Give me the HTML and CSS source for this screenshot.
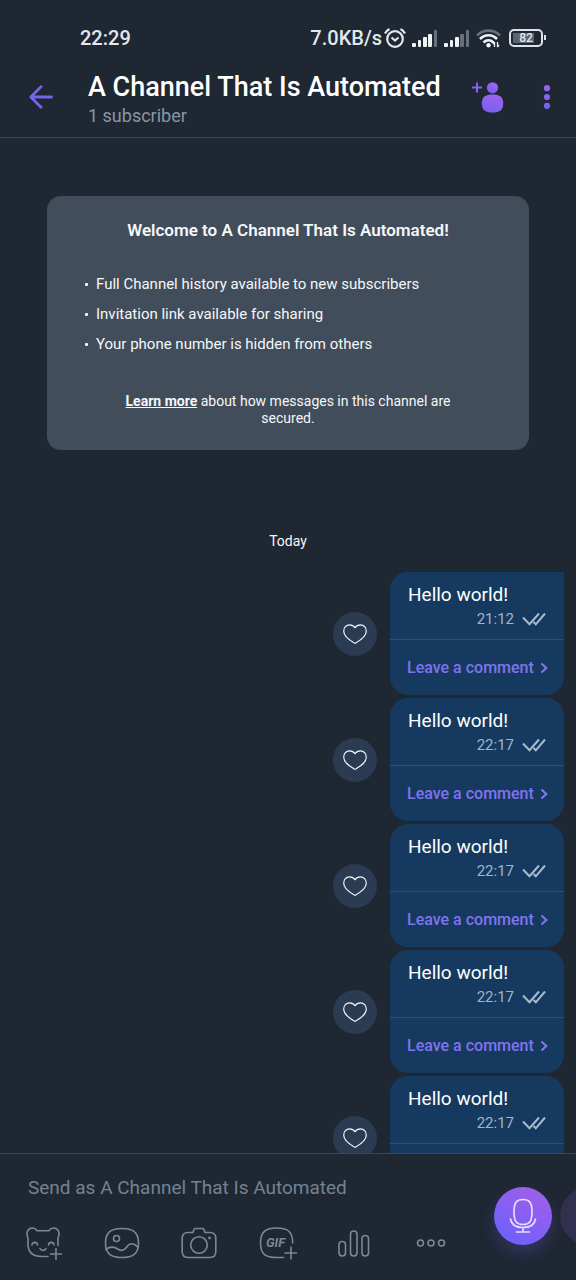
FILE: index.html
```html
<!DOCTYPE html>
<html lang="en">
<head>
<meta charset="utf-8">
<meta name="viewport" content="width=device-width, initial-scale=1">
<title>A Channel That Is Automated</title>
<link rel="stylesheet" href="styles.css">
</head>
<body>
<svg class="defs" width="0" height="0" aria-hidden="true">
  <defs>
    <linearGradient id="violet" x1="0" y1="1" x2="0.5" y2="0">
      <stop offset="0" stop-color="#7360f2"/>
      <stop offset="1" stop-color="#9b63ee"/>
    </linearGradient>
    <linearGradient id="violet-dots" gradientUnits="userSpaceOnUse" x1="0" y1="24" x2="0" y2="0">
      <stop offset="0" stop-color="#6f62f2"/>
      <stop offset="1" stop-color="#9b63ee"/>
    </linearGradient>
    <symbol id="heart" viewBox="0 0 24 20">
      <path d="M12 19.300C9 17.600.7 13.500.7 7 .7 3.500 3.200.8 6.500.8c2.400 0 4.400 1.200 5.500 3 1.100-1.800 3.100-3 5.500-3 3.300 0 5.800 2.700 5.800 6.200 0 6.500-8.300 10.600-11.300 12.300z" fill="none" stroke="#f2f5f8" stroke-width="1.200" stroke-linejoin="round"/>
    </symbol>
    <symbol id="ticks" viewBox="0 0 24 14">
      <path d="M1 5.500l6.500 6.700L17 1.500M11.500 10l2.300 2.300L23 1.500" fill="none" stroke="#a9bbcd" stroke-width="2"/>
    </symbol>
    <symbol id="chevron" viewBox="0 0 8 12">
      <path d="M1.500 1.500L6.300 6 1.500 10.500" fill="none" stroke="#8074ec" stroke-width="2.200"/>
    </symbol>
    <symbol id="signal" viewBox="0 0 26 17">
      <rect x="0" y="13" width="4" height="4" rx="1"/>
      <rect x="6" y="10" width="3" height="7" rx="1"/>
      <rect x="11" y="7" width="4" height="10" rx="1"/>
    </symbol>
  </defs>
</svg>

<div class="status">
  <span class="clock">22:29</span>
  <div class="status-icons">
    <span>7.0KB/s</span>
    <svg class="alarm" width="22" height="20" viewBox="0 0 22 20" fill="none" stroke="#e4e8ec" stroke-width="2.200">
      <circle cx="11" cy="11" r="7.800"/>
      <path d="M1 5.500C2 3.500 3.500 2 5.500 1M21 5.500C20 3.500 18.500 2 16.500 1M7.500 9.500l3.500 3 3.500-3"/>
    </svg>
    <svg class="bars" width="26" height="17" viewBox="0 0 26 17" fill="#f0f3f5">
      <use href="#signal"/>
      <rect x="16" y="4" width="4" height="13" rx="1"/>
      <rect x="22" y="0" width="3" height="17" rx="1" fill="#66707c"/>
    </svg>
    <svg class="bars" width="26" height="17" viewBox="0 0 26 17" fill="#f0f3f5">
      <use href="#signal"/>
      <rect x="16" y="4" width="4" height="13" rx="1" fill="#66707c"/>
      <rect x="22" y="0" width="3" height="17" rx="1" fill="#66707c"/>
    </svg>
    <svg class="wifi" width="25" height="19" viewBox="0 0 25 19" fill="none" stroke="#f0f3f5" stroke-width="2.600">
      <path d="M1 6.500C7.500 0 17.500 0 24 6.500" stroke="#66707c"/>
      <path d="M4 10c5-5 12-5 17 0M7.500 13.500c3-2.800 7-2.800 10 0"/>
      <circle cx="12.500" cy="16.300" r="2.200" fill="#f0f3f5" stroke="none"/>
      <path d="M18.500 18v-5M21.500 13v5M17 15l1.500-2M23 16l-1.500 2" stroke-width="1.300"/>
    </svg>
    <span class="battery"><span class="battery-level">82</span></span>
  </div>
</div>

<header class="header">
  <button class="icon-button" aria-label="Back">
    <svg width="24" height="24" viewBox="0 0 24 24" fill="none" stroke="#7663ee" stroke-width="2.800" stroke-linecap="round" stroke-linejoin="round">
      <path d="M22.500 12H2M12 1.800L1.800 12 12 22.200"/>
    </svg>
  </button>
  <div class="heading">
    <h1 class="title">A Channel That Is Automated</h1>
    <p class="subtitle">1 subscriber</p>
  </div>
  <button class="icon-button" aria-label="Add subscriber">
    <svg width="32" height="32" viewBox="0 0 32 32" fill="url(#violet)">
      <path d="M4 1.500h2V5.600h4v2H6v4H4v-4H0v-2h4z" fill="#8262f0"/>
      <circle cx="20.500" cy="6.800" r="5.600"/>
      <path d="M20.500 13.500c7.500 0 10.700 2.600 10.700 9s-3.200 9-10.700 9-10.700-2.600-10.700-9 3.200-9 10.700-9z"/>
    </svg>
  </button>
  <button class="icon-button more" aria-label="More options">
    <svg width="8" height="24" viewBox="0 0 8 24" fill="url(#violet-dots)">
      <circle cx="4" cy="3.200" r="3.100"/><circle cx="4" cy="12" r="3.100"/><circle cx="4" cy="20.800" r="3.100"/>
    </svg>
  </button>
</header>

<main class="chat">
  <section class="welcome">
    <h2 class="welcome-title">Welcome to A Channel That Is Automated!</h2>
    <ul class="features">
      <li>Full Channel history available to new subscribers</li>
      <li>Invitation link available for sharing</li>
      <li>Your phone number is hidden from others</li>
    </ul>
    <p class="security"><a href="#security">Learn more</a> about how messages in this channel are secured.</p>
  </section>
  <p class="day">Today</p>
  <div class="messages">
    <article class="message">
      <button class="like" aria-label="Like"><svg width="24" height="20"><use href="#heart"/></svg></button>
      <div class="bubble first">
        <div class="body"><p class="text">Hello world!</p><p class="meta"><time>21:12</time><svg width="24" height="14"><use href="#ticks"/></svg></p></div>
        <button class="comment">Leave a comment<svg width="8" height="12"><use href="#chevron"/></svg></button>
      </div>
    </article>
    <article class="message">
      <button class="like" aria-label="Like"><svg width="24" height="20"><use href="#heart"/></svg></button>
      <div class="bubble">
        <div class="body"><p class="text">Hello world!</p><p class="meta"><time>22:17</time><svg width="24" height="14"><use href="#ticks"/></svg></p></div>
        <button class="comment">Leave a comment<svg width="8" height="12"><use href="#chevron"/></svg></button>
      </div>
    </article>
    <article class="message">
      <button class="like" aria-label="Like"><svg width="24" height="20"><use href="#heart"/></svg></button>
      <div class="bubble">
        <div class="body"><p class="text">Hello world!</p><p class="meta"><time>22:17</time><svg width="24" height="14"><use href="#ticks"/></svg></p></div>
        <button class="comment">Leave a comment<svg width="8" height="12"><use href="#chevron"/></svg></button>
      </div>
    </article>
    <article class="message">
      <button class="like" aria-label="Like"><svg width="24" height="20"><use href="#heart"/></svg></button>
      <div class="bubble">
        <div class="body"><p class="text">Hello world!</p><p class="meta"><time>22:17</time><svg width="24" height="14"><use href="#ticks"/></svg></p></div>
        <button class="comment">Leave a comment<svg width="8" height="12"><use href="#chevron"/></svg></button>
      </div>
    </article>
    <article class="message">
      <button class="like" aria-label="Like"><svg width="24" height="20"><use href="#heart"/></svg></button>
      <div class="bubble">
        <div class="body"><p class="text">Hello world!</p><p class="meta"><time>22:17</time><svg width="24" height="14"><use href="#ticks"/></svg></p></div>
        <button class="comment" aria-label="Leave a comment"></button>
      </div>
    </article>
  </div>
</main>

<footer class="composer">
  <div class="compose">
    <input class="field" type="text" placeholder="Send as A Channel That Is Automated" aria-label="Message">
    <div class="tools">
      <button class="tool" aria-label="Stickers">
        <svg width="36" height="34" viewBox="0 0 36 34">
          <path d="M22 30.500h-6C7 30.500 2 26.500 2 18v-6C-.5 7 2 2 6 2c2.500 0 4 1 5 2.700h12C24 3 25.500 2 28 2c4 0 6.500 5 4 10v7.500M6 19c.5-3.500 5-3.500 5.500 0M22.500 19c.5-3.500 5-3.500 5.500 0M14 22.500c1 2.500 5 2.500 6 0M30 22.500v11M24.500 28h11"/>
        </svg>
      </button>
      <button class="tool" aria-label="Gallery">
        <svg width="36" height="34" viewBox="0 0 36 34">
          <path d="M18 2.500C28 2.500 34.500 5.500 34.500 17S28 31.500 18 31.500 1.500 28.500 1.500 17 8 2.500 18 2.500z"/>
          <circle cx="12.500" cy="12.500" r="3"/>
          <path d="M1.800 23.500c4-3 8-3 12-.5 3 2 6 2 8.500-1.500 3.500-5 7-5 12 0"/>
        </svg>
      </button>
      <button class="tool" aria-label="Camera">
        <svg width="36" height="34" viewBox="0 0 36 34">
          <path d="M7 6.500h5l1-3c.3-.8.600-1 1.500-1h7c.9 0 1.200.2 1.500 1l1 3h5c4 0 5.800 2 5.800 6v13c0 4-1.800 6-5.800 6H7c-4 0-5.800-2-5.800-6v-13c0-4 1.800-6 5.800-6z"/>
          <circle cx="18" cy="19" r="8.300"/>
          <circle cx="28.500" cy="12" r=".6"/>
        </svg>
      </button>
      <button class="tool" aria-label="GIF">
        <svg width="38" height="34" viewBox="0 0 38 34">
          <path d="M24.500 31.500h-7C7 31.500 1.500 28.500 1.500 17S7 2 17.500 2s16.200 3 16.200 15M32 21v12M26 27h12"/>
          <text class="gif" x="7" y="21">GIF</text>
        </svg>
      </button>
      <button class="tool" aria-label="Poll">
        <svg width="36" height="34" viewBox="0 0 36 34">
          <rect x="1" y="15.500" width="6.500" height="14.500" rx="3.200"/>
          <rect x="12.500" y="5" width="6.500" height="25" rx="3.200"/>
          <rect x="24" y="9.500" width="6.500" height="20.500" rx="3.200"/>
        </svg>
      </button>
      <button class="tool" aria-label="More">
        <svg width="30" height="34" viewBox="0 0 30 34">
          <circle cx="4.500" cy="17" r="3"/><circle cx="15" cy="17" r="3"/><circle cx="25.500" cy="17" r="3"/>
        </svg>
      </button>
    </div>
  </div>
  <div class="recorders">
    <button class="record" aria-label="Record voice message">
      <svg width="28" height="36" viewBox="0 0 28 36" fill="none" stroke="#ecdcff" stroke-width="1.700" stroke-linecap="round">
        <path d="M14 1.500c6 0 9 2.500 9 12.500s-3 12.500-9 12.500S5 24 5 14 8 1.500 14 1.500zM1.500 21C2.500 27 7 29.500 14 29.500S25.500 27 26.500 21M14 29.500V34M7.500 34h13"/>
      </svg>
    </button>
    <button class="record video" aria-label="Record video message"></button>
  </div>
</footer>
</body>
</html>
```
FILE: styles.css
```css
* {
  box-sizing: border-box;
}

body {
  margin: 0;
  height: 100vh;
  display: flex;
  flex-direction: column;
  overflow: hidden;
  background: #1e2732;
  color: #f5f7f9;
  font-family: Roboto, "Liberation Sans", sans-serif;
}

h1, h2, p, ul {
  margin: 0;
  padding: 0;
}

button {
  padding: 0;
  border: 0;
  background: none;
  color: inherit;
  font: inherit;
  cursor: pointer;
}

svg {
  display: block;
  flex: none;
}

.defs {
  position: absolute;
}

.status {
  display: flex;
  align-items: center;
  justify-content: space-between;
  padding: 24px 33px 4px 80px;
  font-size: 20px;
  font-weight: 500;
  line-height: 28px;
  color: #e4e8ec;
}

.status-icons {
  display: flex;
  align-items: center;
}

.alarm {
  margin-left: 2px;
}

.bars {
  margin-left: 6px;
}

.wifi {
  margin: 0 8px 0 6px;
}

.battery {
  position: relative;
  padding: 2px;
  border: 2px solid #dfe3e7;
  border-radius: 5px;
}

.battery::after {
  content: "";
  position: absolute;
  top: 4px;
  right: -5px;
  width: 2px;
  height: 5px;
  background: #dfe3e7;
}

.battery-level {
  display: block;
  width: 26px;
  background: linear-gradient(90deg, #5b6570 82%, transparent 82%);
  font-size: 12px;
  line-height: 10px;
  text-align: center;
}

.header {
  display: flex;
  align-items: center;
  padding: 15px 25px 8px 29px;
  border-bottom: 1px solid #3d4753;
}

.icon-button {
  flex: none;
  padding-bottom: 6px;
}

.heading {
  flex: 1;
  min-width: 0;
  margin-left: 35px;
}

.title {
  font-size: 27px;
  font-weight: 500;
  line-height: 32px;
  white-space: nowrap;
  color: #fff;
}

.subtitle {
  font-size: 18px;
  line-height: 26px;
  color: #8896a5;
}

.more {
  margin-left: 39px;
}

.chat {
  flex: 1;
  min-height: 0;
  overflow: hidden;
  padding: 58px 12px 0;
}

.welcome {
  margin: 0 35px;
  border-radius: 14px;
  background: #414d5b;
  font-size: 15px;
}

.welcome-title {
  padding: 22px 16px 7px;
  border-bottom: 1px solid #455160;
  font-size: 17px;
  font-weight: 600;
  line-height: 24px;
  text-align: center;
}

.features {
  padding: 19px 38px 0;
  list-style: none;
  line-height: 30px;
}

.features li {
  display: flex;
  align-items: center;
  gap: 8px;
}

.features li::before {
  content: "";
  width: 3px;
  height: 3px;
  border-radius: 1px;
  background: #f5f7f9;
}

.security {
  padding: 34px 60px 23px;
  font-size: 14px;
  line-height: 17px;
  text-align: center;
}

.security a {
  color: inherit;
  font-weight: 700;
}

.day {
  padding: 80px 0 20px;
  font-size: 14px;
  line-height: 22px;
  text-align: center;
}

.messages {
  display: flex;
  flex-direction: column;
  gap: 3px;
}

.message {
  display: flex;
  align-items: center;
  justify-content: flex-end;
  gap: 13px;
}

.like {
  display: grid;
  place-items: center;
  width: 44px;
  height: 44px;
  border-radius: 50%;
  background: #2b3b52;
}

.bubble {
  min-width: 174px;
  border-radius: 18px;
  background: #163a5f;
}

.first {
  border-top-right-radius: 0;
}

.body {
  padding: 10px 18px 9px;
  border-bottom: 1px solid #2c5075;
}

.text {
  font-size: 19px;
  line-height: 26px;
  color: #fff;
}

.meta {
  display: flex;
  align-items: center;
  justify-content: flex-end;
  gap: 8px;
  font-size: 15px;
  line-height: 22px;
  color: #a3b4c6;
}

.comment {
  display: flex;
  align-items: center;
  gap: 6px;
  width: 100%;
  min-height: 55px;
  padding: 18px 16px 17px 17px;
  font-size: 16px;
  font-weight: 500;
  line-height: 20px;
  color: #8074ec;
}

.composer {
  display: flex;
  align-items: center;
  padding-bottom: 20px;
  border-top: 1px solid #3d4753;
  overflow: hidden;
}

.compose {
  flex: 1;
  min-width: 0;
  padding: 20px 0 0 26px;
}

.field {
  display: block;
  width: 100%;
  padding: 0 2px;
  border: 0;
  outline: 0;
  background: none;
  color: #f5f7f9;
  font: inherit;
  font-size: 19px;
  line-height: 28px;
}

.field::placeholder {
  color: #748292;
  opacity: 1;
}

.tools {
  display: flex;
  justify-content: space-between;
  margin-top: 24px;
  padding-right: 48px;
}

.tool svg {
  fill: none;
  stroke: #7b8896;
  stroke-width: 1.600;
  stroke-linecap: round;
}

.tool .gif {
  fill: #7b8896;
  stroke: none;
  font-size: 13px;
  font-style: italic;
  font-weight: 700;
}

.recorders {
  display: flex;
  gap: 8px;
  width: 82px;
  padding-top: 18px;
}

.record {
  display: grid;
  flex: none;
  place-items: center;
  width: 58px;
  height: 58px;
  border-radius: 50%;
  background: linear-gradient(30deg, #7360fa 20%, #a05fea 90%);
  box-shadow: 0 8px 16px #7360f240;
}

.video {
  background: #33304f;
  box-shadow: none;
}
```
